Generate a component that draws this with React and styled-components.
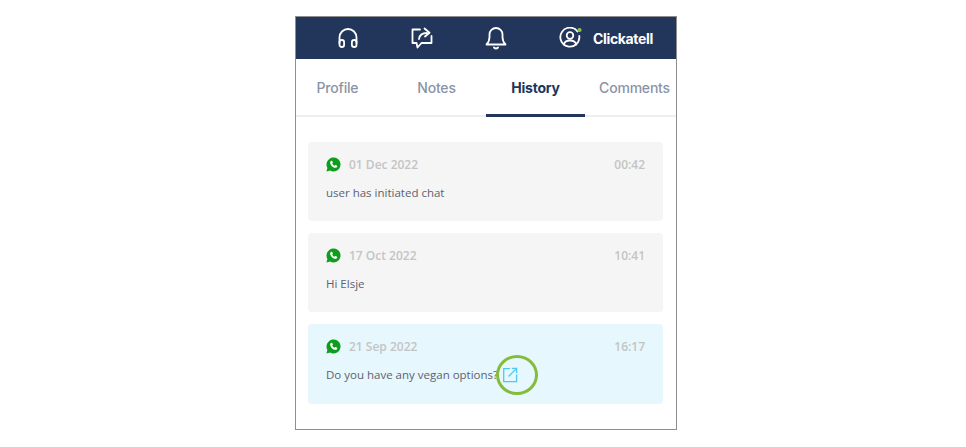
import React from "react";
import styled, { createGlobalStyle } from "styled-components";

const Global = createGlobalStyle`
  html, body { margin: 0; padding: 0; background: #fff; }
  body { font-family: "Open Sans", sans-serif; }
`;

const Frame = styled.div`
  box-sizing: border-box;
  width: 382px;
  height: 414px;
  margin: 16px 0 0 295px;
  border: 1px solid #8e8e8e;
  overflow: hidden;
  background: #fff;
`;

const Header = styled.header`
  height: 42px;
  background: #22355b;
  display: flex;
  align-items: center;
  gap: 52px;
  padding-left: 41px;
  color: #fff;
`;

const Account = styled.div`
  display: flex;
  align-items: center;
  gap: 10px;
`;

const AccountName = styled.span`
  font-family: Inter, sans-serif;
  font-size: 14px;
  font-weight: 700;
  letter-spacing: -0.35px;
  color: #fff;
`;

const Tabs = styled.nav`
  height: 58px;
  display: flex;
  justify-content: center;
  border-bottom: 2px solid #eeeeee;
  box-sizing: border-box;
`;

const Tab = styled.div`
  flex: none;
  width: 99px;
  box-sizing: border-box;
  height: 58px;
  padding-top: 20px;
  text-align: center;
  font-family: Inter, sans-serif;
  font-size: 14px;
  line-height: 17px;
  letter-spacing: -0.2px;
  font-weight: ${(p) => (p.$active ? 700 : 500)};
  color: ${(p) => (p.$active ? "#22355b" : "#8a94a6")};
  border-bottom: 3px solid ${(p) => (p.$active ? "#22355b" : "transparent")};
`;

const List = styled.div`
  display: flex;
  flex-direction: column;
  gap: 12px;
  padding: 25px 13px 0 12px;
`;

const Card = styled.article`
  box-sizing: border-box;
  height: ${(p) => (p.$highlight ? 80 : 79)}px;
  padding: 14px 18px 0 18px;
  border-radius: 4px;
  background: ${(p) => (p.$highlight ? "#e6f7fd" : "#f5f5f5")};
`;

const CardTop = styled.div`
  display: flex;
  align-items: center;
  height: 17px;
  font-size: 12px;
  font-weight: 600;
  color: #c4c4c4;
`;

const DateLabel = styled.span`
  margin-left: 8px;
  flex: 1;
`;

const Message = styled.div`
  position: relative;
  display: flex;
  align-items: center;
  margin-top: 11px;
  height: 17px;
  font-size: 11.5px;
  color: #5c6270;
`;

const LinkIcon = styled.svg`
  margin-left: 4px;
  flex: none;
`;

const Ring = styled.div`
  position: absolute;
  left: 170px;
  top: -11px;
  width: 42px;
  height: 40px;
  box-sizing: border-box;
  border: 3px solid #86bc3c;
  border-radius: 50%;
`;

const stroke = {
  fill: "none",
  stroke: "#fff",
  strokeWidth: 1.8,
  strokeLinecap: "round",
  strokeLinejoin: "round",
};

const Headset = () => (
  <svg width="22" height="22" viewBox="0 0 22 22" {...stroke}>
    <path d="M2.5 16V10.5a8.5 8.5 0 0 1 17 0V16" />
    <rect x="2.5" y="13" width="4.6" height="7" rx="2.3" />
    <rect x="14.9" y="13" width="4.6" height="7" rx="2.3" />
  </svg>
);

const Share = () => (
  <svg width="22" height="22" viewBox="0 0 22 22" {...stroke}>
    <path d="M9 2.5H1.5V16H5.5L6.5 20.5L10.5 16H20.5V9" />
    <path d="M8 12C8.5 8 11 6 16 6" />
    <path d="M13.5 1.5L18.5 5.8L14 9.5" />
  </svg>
);

const Bell = () => (
  <svg width="22" height="24" viewBox="0 0 22 24" {...stroke}>
    <path d="M1.5 18.5C3.5 16.5 4.5 15 4.5 11V8.5a6.5 6.5 0 0 1 13 0V11C17.5 15 18.5 16.5 20.5 18.5Z" />
    <path d="M9 21.5Q11 23.5 13 21.5" />
  </svg>
);

const User = () => (
  <svg width="24" height="22" viewBox="0 0 24 22">
    <g {...stroke}>
      <path d="M18.5 4.5A9.5 9.5 0 1 0 20.3 9" />
      <circle cx="11" cy="8.5" r="3.3" />
      <path d="M4.8 17.5C5.5 14.5 8 13.5 11 13.5S16.5 14.5 17.2 17.5" />
    </g>
    <circle cx="20.5" cy="3" r="2.1" fill="#8cc63f" />
  </svg>
);

const WhatsApp = () => (
  <svg width="15" height="15" viewBox="0 0 15 15">
    <path d="M0.4 14.6L1.4 10.9A7 7 0 1 1 4.1 13.6Z" fill="#0f9d1e" />
    <path
      d="M5.3 3.7C4.4 4.1 3.9 5.1 4.3 6.4C5 8.6 6.5 10 8.6 10.7C10 11.1 11 10.4 11.3 9.4C11.4 9 11.3 8.8 11 8.7L9.7 8C9.4 7.9 9.2 8 9 8.2L8.6 8.7C7.5 8.3 6.7 7.5 6.2 6.4L6.7 5.9C6.9 5.7 6.9 5.5 6.8 5.3L6.2 3.9C6 3.6 5.7 3.6 5.3 3.7Z"
      fill="#fff"
    />
  </svg>
);

const ExternalLink = () => (
  <LinkIcon
    width="16"
    height="16"
    viewBox="0 0 16 16"
    fill="none"
    stroke="#4fc8f2"
    strokeWidth="1.3"
  >
    <path d="M8 1.7H1.7V14.6H14.6V7.5" />
    <path d="M6.5 9.5L14.6 1.4M9.8 1.4H14.6V6" />
  </LinkIcon>
);

const entries = [
  { date: "01 Dec 2022", time: "00:42", text: "user has initiated chat" },
  { date: "17 Oct 2022", time: "10:41", text: "Hi Elsje" },
  { date: "21 Sep 2022", time: "16:17", text: "Do you have any vegan options?", highlight: true },
];

export default function App() {
  return (
    <>
      <Global />
      <Frame>
        <Header>
          <Headset />
          <Share />
          <Bell />
          <Account>
            <User />
            <AccountName>Clickatell</AccountName>
          </Account>
        </Header>
        <Tabs>
          <Tab>Profile</Tab>
          <Tab>Notes</Tab>
          <Tab $active>History</Tab>
          <Tab>Comments</Tab>
        </Tabs>
        <List>
          {entries.map((e) => (
            <Card key={e.date} $highlight={e.highlight}>
              <CardTop>
                <WhatsApp />
                <DateLabel>{e.date}</DateLabel>
                <span>{e.time}</span>
              </CardTop>
              <Message>
                {e.text}
                {e.highlight && (
                  <>
                    <ExternalLink />
                    <Ring />
                  </>
                )}
              </Message>
            </Card>
          ))}
        </List>
      </Frame>
    </>
  );
}
